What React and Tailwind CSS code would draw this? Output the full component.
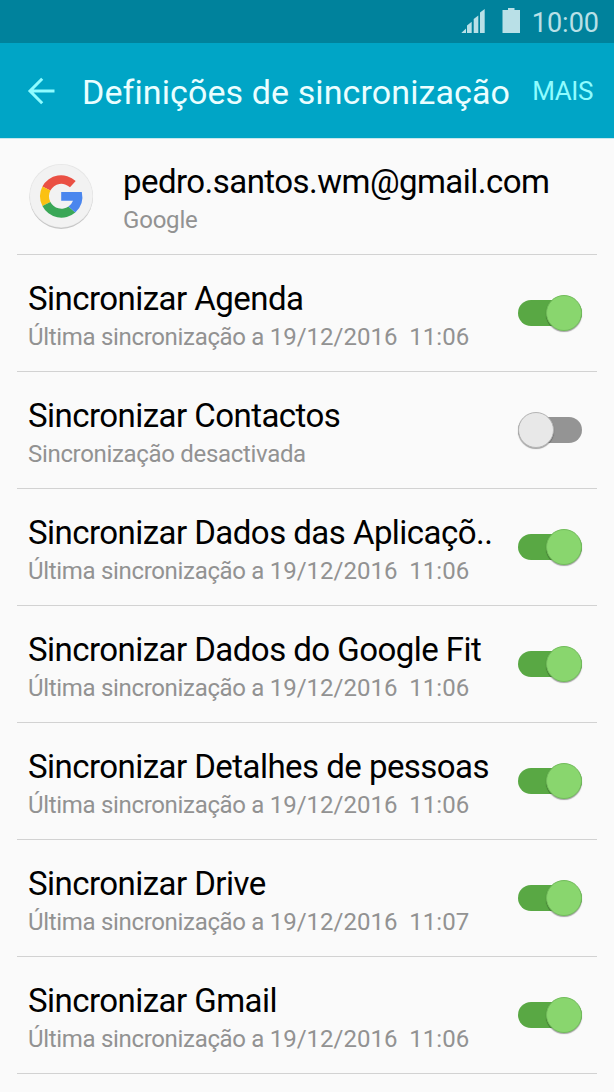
import { useState } from 'react';

const initialItems = [
  { id: 'agenda', title: 'Sincronizar Agenda', status: 'Última sincronização a ', date: '19/12/2016  11:06', enabled: true },
  { id: 'contactos', title: 'Sincronizar Contactos', status: 'Sincronização desactivada', enabled: false },
  { id: 'aplicacoes', title: 'Sincronizar Dados das Aplicaçõ..', status: 'Última sincronização a ', date: '19/12/2016  11:06', enabled: true },
  { id: 'fit', title: 'Sincronizar Dados do Google Fit', status: 'Última sincronização a ', date: '19/12/2016  11:06', enabled: true },
  { id: 'pessoas', title: 'Sincronizar Detalhes de pessoas', status: 'Última sincronização a ', date: '19/12/2016  11:06', enabled: true },
  { id: 'drive', title: 'Sincronizar Drive', status: 'Última sincronização a ', date: '19/12/2016  11:07', enabled: true },
  { id: 'gmail', title: 'Sincronizar Gmail', status: 'Última sincronização a ', date: '19/12/2016  11:06', enabled: true },
];

const StatusBar = () => (
  <div className="flex h-[43px] justify-end bg-[#00829c] pr-[15px] pt-2 text-[#b9e0e7]">
    <svg className="mr-[17px] mt-px h-6 w-6" viewBox="0 0 24 24" fill="currentColor">
      <path d="M0.300 24L5 19.500V24Z" />
      <path d="M6 16.500L10.700 12.800V24H6Z" />
      <path d="M12.700 10L17.300 6.500V24H12.700Z" />
      <path d="M19 3.500L23.700 0V24H19Z" />
    </svg>
    <svg className="mr-3 h-[25px] w-[18px]" viewBox="0 0 18 25" fill="currentColor">
      <path d="M6 0H12.500V2H18V25H0.500V2H6Z" />
    </svg>
    <span className="text-[27px] leading-[30px]">10:00</span>
  </div>
);

const Header = () => (
  <header className="flex h-24 items-center border-b border-[#c5e7ed] bg-[#00a5c6] pl-[27px] pr-[21px]">
    <button aria-label="Voltar" className="mr-[27px] text-[#8ffcff]">
      <svg className="h-7 w-7" viewBox="0 0 28 28" fill="none" stroke="currentColor" strokeWidth="3">
        <path d="M15.200 1.800L3 14L15.200 26.200M3 14H27.500" />
      </svg>
    </button>
    <h1 className="flex-1 whitespace-nowrap pt-0.5 text-[34px] leading-10 tracking-[0.1px] text-[#eafeff]">
      Definições de sincronização
    </h1>
    <button className="text-[26px] leading-none tracking-[-0.4px] text-[#8ffcff]">MAIS</button>
  </header>
);

const GoogleLogo = () => (
  <svg className="h-[68px] w-[68px]" viewBox="0 0 68 68" fill="none">
    <circle cx="34.200" cy="35.200" r="31.700" fill="#c6c6c6" />
    <circle cx="34.200" cy="33.800" r="31.900" fill="#e6e6e6" />
    <circle cx="34.200" cy="34" r="31.200" fill="#f2f2f2" />
    <path fill="#ea5044" d="M15.400 24.500A21.300 21.300 0 0 1 48.700 19L43 25.300A12.400 12.400 0 0 0 23.400 28.500Z" />
    <path fill="#fbc112" d="M15.400 24.500A21.300 21.300 0 0 0 15.400 43.900L23.400 39.900A12.400 12.400 0 0 1 23.400 28.500Z" />
    <path fill="#3aa757" d="M15.400 43.900A21.300 21.300 0 0 0 48.300 50.500L41.500 44.500A12.400 12.400 0 0 1 23.400 39.900Z" />
    <path fill="#4a86ee" d="M34.200 30H54.800A21.300 21.300 0 0 1 48.300 50.500L41.500 44.500A12.400 12.400 0 0 0 46 38.700H34.200Z" />
  </svg>
);

const Toggle = ({ enabled, onChange }) => (
  <button
    role="switch"
    aria-checked={enabled}
    onClick={onChange}
    className={`flex h-[26px] w-16 shrink-0 items-center rounded-full ${
      enabled ? 'justify-end bg-[#59a844]' : 'justify-start bg-[#949494]'
    }`}
  >
    <span
      className={`h-9 w-9 rounded-full border shadow-[0_1px_1px_rgba(0,0,0,0.35)] ${
        enabled ? 'border-[#72bd5b] bg-[#89d66e]' : 'border-[#b5b5b5] bg-[#e8e8e8]'
      }`}
    />
  </button>
);

const SyncRow = ({ item, onToggle }) => (
  <li className="mx-[17px] flex h-[117px] items-center justify-between border-b border-[#d2d2d2] pl-[11px] pr-[15px]">
    <div className="whitespace-pre pt-[7px]">
      <p className="text-[33px] leading-10 tracking-[-0.54px] text-black">{item.title}</p>
      <p className="text-[24px] leading-9 text-[#929292]">
        <span className="tracking-[-0.32px]">{item.status}</span>
        {item.date}
      </p>
    </div>
    <Toggle enabled={item.enabled} onChange={() => onToggle(item.id)} />
  </li>
);

const App = () => {
  const [items, setItems] = useState(initialItems);

  const handleToggle = id => {
    setItems(items.map(item => (item.id === id ? { ...item, enabled: !item.enabled } : item)));
  };

  return (
    <div className="h-[1092px] w-[614px] overflow-hidden bg-[#fafafa] font-['Roboto',sans-serif]">
      <StatusBar />
      <Header />
      <div className="mx-[17px] flex h-[116px] items-center border-b border-[#d2d2d2] pb-0.5 pl-2.5">
        <GoogleLogo />
        <div className="ml-7 pt-2">
          <p className="text-[33px] leading-10 tracking-[-0.54px] text-black">pedro.santos.wm@gmail.com</p>
          <p className="text-[24px] leading-9 tracking-[-0.2px] text-[#929292]">Google</p>
        </div>
      </div>
      <ul>
        {items.map(item => (
          <SyncRow key={item.id} item={item} onToggle={handleToggle} />
        ))}
      </ul>
    </div>
  );
};

export default App;
